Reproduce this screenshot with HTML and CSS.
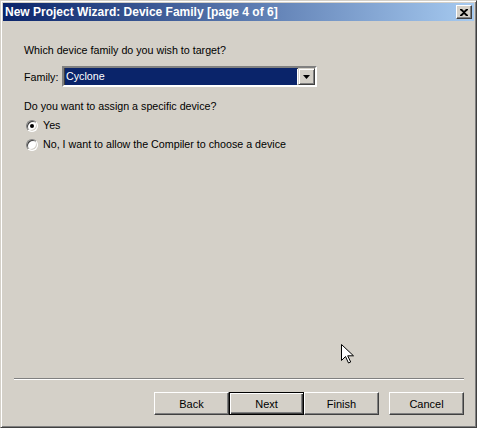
FILE: index.html
```html
<!DOCTYPE html>
<html lang="en">
<head>
  <meta charset="UTF-8" />
  <title>New Project Wizard: Device Family</title>
  <link rel="stylesheet" href="styles.css">
</head>
<body>

  <div class="window">
    <div class="titlebar">
      <span class="title">New Project Wizard: Device Family [page 4 of 6]</span>
      <button class="close-btn">
        <svg width="8" height="7" viewBox="0 0 8 7">
          <path d="M0 0h2l2 2 2-2h2v1L5 3.5 8 6v1H6L4 5 2 7H0V6l3-2.5L0 1z" fill="#000"/>
        </svg>
      </button>
    </div>

    <div class="content">
      <p class="question first">Which device family do you wish to target?</p>

      <div class="family-row">
        <label>Family:</label>
        <div class="combo">
          <div class="combo-value"><span>Cyclone</span></div>
          <div class="combo-btn">
            <svg width="7" height="4" viewBox="0 0 7 4"><path d="M0 0h7L3.5 4z" fill="#000"/></svg>
          </div>
        </div>
      </div>

      <p class="question">Do you want to assign a specific device?</p>

      <div class="radio-row">
        <span class="radio checked"></span>
        <span>Yes</span>
      </div>
      <div class="radio-row">
        <span class="radio"></span>
        <span>No, I want to allow the Compiler to choose a device</span>
      </div>
    </div>

    <div class="separator"></div>

    <div class="buttons">
      <button class="btn">Back</button>
      <button class="btn default">Next</button>
      <button class="btn">Finish</button>
      <button class="btn cancel">Cancel</button>
    </div>

    <svg class="cursor" width="13" height="20" viewBox="0 0 13 20">
      <path d="M0.5 0.5v16l4-4 3 6.5 2.2-1-3-6.2h5.8z" fill="#fff" stroke="#000" stroke-width="1"/>
    </svg>
  </div>

</body>
</html>
```

FILE: styles.css
```css
body {
  margin: 0;
  background: #d4d0c8;
  font-family: "Liberation Sans", Arial, sans-serif;
  font-size: 10.7px;
  color: #000;
}
.window {
  position: relative;
  width: 477px;
  height: 428px;
  box-sizing: border-box;
  border: 1px solid;
  border-color: #d4d0c8 #404040 #404040 #d4d0c8;
  box-shadow: inset 1px 1px #fff, inset -1px -1px #808080;
  padding: 2px;
  display: flex;
  flex-direction: column;
  background: #d4d0c8;
}
.titlebar {
  height: 18px;
  background: linear-gradient(to right, #0a246a, #a6caf0);
  display: flex;
  align-items: center;
  justify-content: space-between;
  padding: 0 2px;
}
.title {
  color: #fff;
  font-weight: bold;
  font-size: 12px;
  white-space: nowrap;
}
.close-btn {
  width: 16px;
  height: 14px;
  padding: 0;
  background: #d4d0c8;
  border: 1px solid;
  border-color: #fff #404040 #404040 #fff;
  box-shadow: inset -1px -1px #808080;
  display: flex;
  align-items: center;
  justify-content: center;
}
.content {
  flex: 1;
  padding-left: 21px;
}
.question {
  margin: 13px 0 0;
  line-height: 13px;
}
.question.first {
  margin-top: 23px;
}
.family-row {
  margin-top: 9px;
  display: flex;
  align-items: center;
}
.family-row label {
  width: 38px;
}
.combo {
  width: 255px;
  height: 21px;
  box-sizing: border-box;
  border: 2px solid;
  border-color: #808080 #fff #fff #808080;
  box-shadow: inset 1px 1px #404040, inset -1px -1px #d4d0c8;
  background: #fff;
  display: flex;
}
.combo-value {
  flex: 1;
  display: flex;
  padding: 0 1px;
}
.combo-value span {
  flex: 1;
  background: #0a246a;
  color: #fff;
  line-height: 17px;
  padding-left: 1px;
}
.combo-btn {
  width: 15px;
  height: 15px;
  background: #d4d0c8;
  border: 1px solid;
  border-color: #d4d0c8 #404040 #404040 #d4d0c8;
  box-shadow: inset 1px 1px #fff, inset -1px -1px #808080;
  display: flex;
  align-items: center;
  justify-content: center;
}
.radio-row {
  margin-top: 6px;
  display: flex;
  align-items: center;
  gap: 5px;
  line-height: 13px;
}
.radio {
  position: relative;
  width: 10px;
  height: 10px;
  margin-left: 2px;
  border-radius: 50%;
  background: #fff;
  border: 1px solid;
  border-color: #808080 #fff #fff #808080;
  box-shadow: inset 1px 1px #404040, inset -1px -1px #d4d0c8;
}
.radio.checked::after {
  content: "";
  position: absolute;
  left: 3px;
  top: 3px;
  width: 4px;
  height: 4px;
  border-radius: 50%;
  background: #000;
}
.separator {
  margin: 0 10px 0 11px;
  border-top: 1px solid #808080;
  border-bottom: 1px solid #fff;
  height: 0;
}
.buttons {
  display: flex;
  justify-content: flex-end;
  padding: 12px 10px 10px 0;
}
.btn {
  width: 75px;
  height: 23px;
  font-family: "Liberation Sans", Arial, sans-serif;
  font-size: 11px;
  color: #000;
  background: #d4d0c8;
  border: 1px solid;
  border-color: #fff #404040 #404040 #fff;
  box-shadow: inset -1px -1px #808080;
  padding: 0;
}
.btn.default {
  border: 1px solid #000;
  box-shadow: inset 1px 1px #fff, inset -1px -1px #404040, inset -2px -2px #808080;
}
.btn.cancel {
  margin-left: 10px;
}
.cursor {
  position: absolute;
  left: 340px;
  top: 343px;
}
```
